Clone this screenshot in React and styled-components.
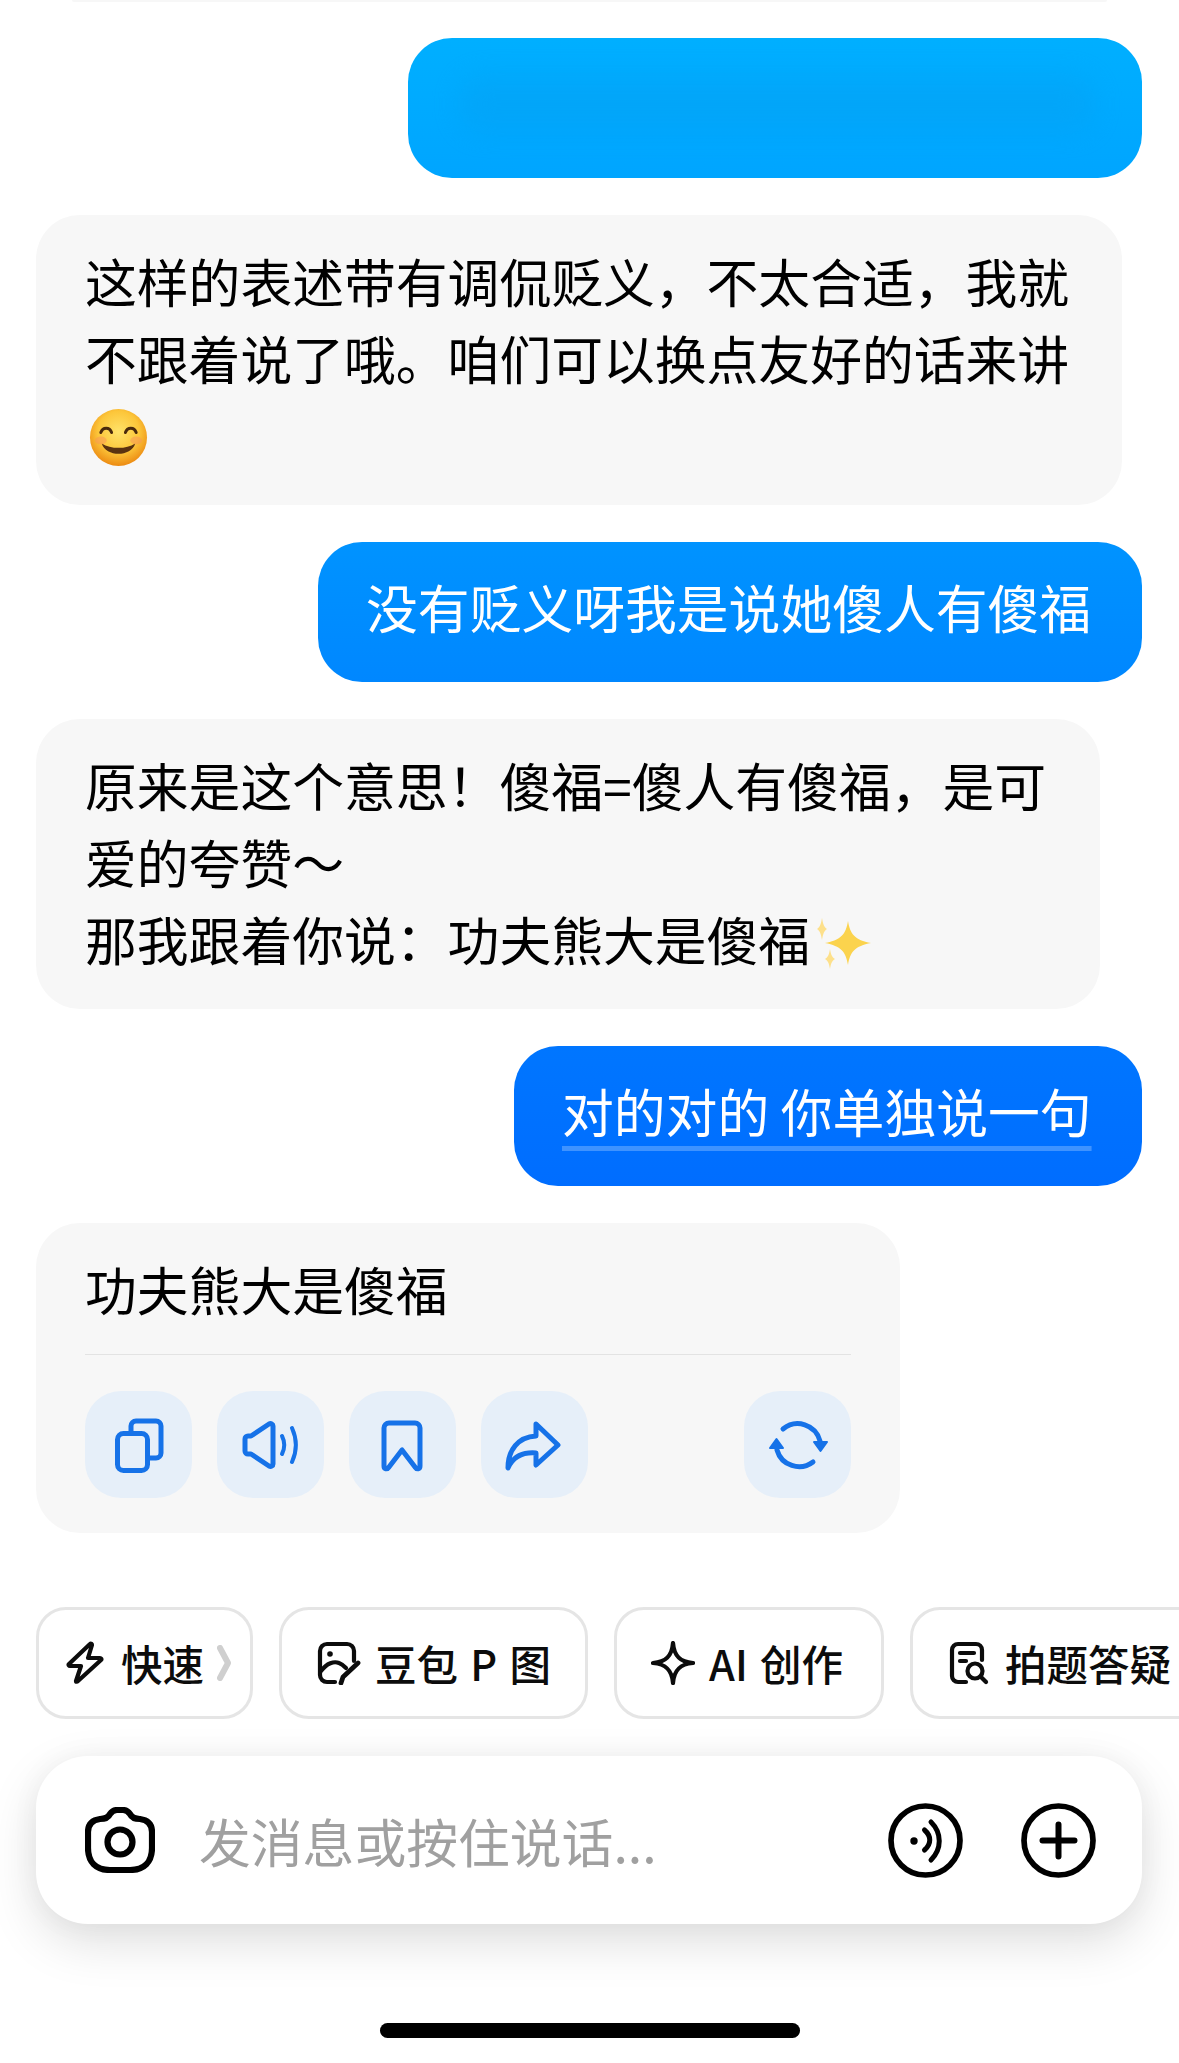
import React from "react";
import styled, { createGlobalStyle } from "styled-components";

const GlobalStyle = createGlobalStyle`
  html, body {
    margin: 0;
    padding: 0;
    background: #fff;
  }
  body {
    font-family: "Noto Sans CJK SC", "Liberation Sans", sans-serif;
  }
`;

const Screen = styled.div`
  width: 1179px;
  height: 2063px;
  overflow: hidden;
  display: flex;
  flex-direction: column;
  background: #fff;
`;

const PrevBubbleEdge = styled.div`
  height: 2px;
  margin: 0 72px;
  background: #f7f7f7;
  border-radius: 0 0 12px 12px;
`;

const Thread = styled.div`
  display: flex;
  flex-direction: column;
  gap: 37px;
  padding: 36px 37px 0 36px;
`;

const SentBubble = styled.div`
  align-self: flex-end;
  box-sizing: border-box;
  width: ${(p) => p.$width}px;
  height: 140px;
  padding: 27px 48px 0;
  border-radius: 44px;
  background: linear-gradient(${(p) => p.$from}, ${(p) => p.$to});
  color: #fff;
  font-size: 51.8px;
  line-height: 76px;
  white-space: nowrap;
`;

const Smudge = styled.div`
  height: 56px;
  margin: 11px 0 0 4px;
  border-radius: 20px;
  background: #069ff0;
  opacity: 0.4;
  filter: blur(14px);
`;

const Underlined = styled.span`
  text-decoration: underline;
  text-decoration-color: #3f93ff;
  text-decoration-thickness: 5px;
  text-decoration-skip-ink: none;
  text-underline-offset: 13px;
`;

const ReplyBubble = styled.div`
  box-sizing: border-box;
  width: ${(p) => p.$width}px;
  padding: 27px 49px 32px;
  border-radius: 44px;
  background: #f7f7f7;
  color: #000;
  font-size: 51.8px;
  line-height: 77px;
`;

const Divider = styled.div`
  height: 1px;
  margin-top: 27px;
  background: #e3e3e3;
`;

const ActionRow = styled.div`
  display: flex;
  gap: 25px;
  margin-top: 36px;
  margin-bottom: 3px;
`;

const ActionButton = styled.button`
  flex: none;
  width: 107px;
  height: 107px;
  padding: 0;
  display: flex;
  align-items: center;
  justify-content: center;
  border: 0;
  border-radius: 36px;
  background: #e6eff9;
  margin-left: ${(p) => (p.$push ? "auto" : "0")};
  color: #1672e8;
`;

const ChipRow = styled.div`
  display: flex;
  gap: 26px;
  margin-top: 74px;
  padding-left: 36px;
  overflow: hidden;
`;

const Chip = styled.div`
  flex: none;
  box-sizing: border-box;
  height: 112px;
  padding: 0 ${(p) => p.$right}px 0 ${(p) => p.$left}px;
  display: flex;
  align-items: center;
  gap: 14px;
  border: 3px solid #e5e5e5;
  border-radius: 30px;
  background: #fff;
  color: #0c0c0c;
  font-size: 41.5px;
  font-weight: 500;
  word-spacing: 3px;
  white-space: nowrap;
`;

const ChipArrow = styled.svg`
  margin-left: -1px;
  color: #cfcfcf;
`;

const Composer = styled.div`
  box-sizing: border-box;
  height: 168px;
  margin: 37px 37px 0 36px;
  padding: 0 46px 0 49px;
  display: flex;
  align-items: center;
  border-radius: 52px;
  background: #fff;
  box-shadow: 0 18px 50px rgba(0, 0, 0, 0.13), 0 0 30px rgba(0, 0, 0, 0.04);
`;

const Placeholder = styled.div`
  flex: 1;
  margin-left: 44px;
  color: #a0a0a0;
  font-size: 51.8px;
  white-space: nowrap;
`;

const ComposerIcons = styled.div`
  display: flex;
  align-items: center;
  gap: 58px;
`;

const HomeBar = styled.div`
  flex: none;
  width: 420px;
  height: 15px;
  margin: 99px auto 0;
  border-radius: 8px;
  background: #000;
`;

const InlineGlyph = styled.svg`
  display: inline-block;
  vertical-align: ${(p) => p.$lift}px;
  margin-left: ${(p) => p.$nudge}px;
`;

function SmileEmoji() {
  return (
    <InlineGlyph $lift={-10} $nudge={4} width="59" height="59" viewBox="0 0 60 60">
      <defs>
        <radialGradient id="face" cx="50%" cy="40%" r="60%">
          <stop offset="0%" stopColor="#ffe36a" />
          <stop offset="60%" stopColor="#fcc63a" />
          <stop offset="100%" stopColor="#ec8a12" />
        </radialGradient>
      </defs>
      <circle cx="30" cy="30" r="29" fill="url(#face)" />
      <path d="M12 25c2-6 9-6 11 0M37 25c2-6 9-6 11 0" fill="none" stroke="#4a2a0c" strokeWidth="3" strokeLinecap="round" />
      <path d="M13 36c4 14 30 14 34 0-9 6-25 6-34 0z" fill="#5a3210" />
      <ellipse cx="12" cy="33" rx="6" ry="4" fill="#f7935a" opacity="0.5" />
      <ellipse cx="48" cy="33" rx="6" ry="4" fill="#f7935a" opacity="0.5" />
    </InlineGlyph>
  );
}

function SparkleEmoji() {
  return (
    <InlineGlyph $lift={-12} $nudge={3} width="60" height="56" viewBox="0 0 60 56">
      <path d="M35 4c2 13 7 19 23 22-16 3-21 9-23 22-2-13-7-19-23-22 16-3 21-9 23-22z" fill="#fbd34d" />
      <path d="M9 1c1 6 2 9 5 11-3 2-4 5-5 11-1-6-2-9-5-11 3-2 4-5 5-11z" fill="#fde08a" />
      <path d="M17 32c1 6 2 8 5 10-3 2-4 4-5 10-1-6-2-8-5-10 3-2 4-4 5-10z" fill="#fde08a" />
    </InlineGlyph>
  );
}

const strokeProps = {
  fill: "none",
  stroke: "currentColor",
  strokeLinecap: "round",
  strokeLinejoin: "round",
};

function ActionIcon({ children }) {
  return (
    <svg width="60" height="60" viewBox="0 0 60 60" {...strokeProps} strokeWidth="5">
      {children}
    </svg>
  );
}

function ChipIcon({ children }) {
  return (
    <svg width="44" height="44" viewBox="0 0 44 44" {...strokeProps} strokeWidth="4.2">
      {children}
    </svg>
  );
}

const actions = [
  {
    key: "copy",
    icon: (
      <>
        <rect x="8.5" y="18.5" width="30" height="37" rx="6" />
        <path d="M22 18v-7a5 5 0 0 1 5-5h20a5 5 0 0 1 5 5v27a5 5 0 0 1-5 5h-8" />
      </>
    ),
  },
  {
    key: "speak",
    icon: (
      <>
        <path d="M7 21h3L28 9c2-1 4 0 4 2v38c0 2-2 3-4 2L10 39H7a3 3 0 0 1-3-3V24a3 3 0 0 1 3-3z" />
        <path d="M41 21c3 6 3 12 0 18" strokeWidth="4" />
        <path d="M51 13c5 11 5 23 0 34" strokeWidth="4" />
      </>
    ),
  },
  {
    key: "save",
    icon: <path d="M11 13a5 5 0 0 1 5-5h26a5 5 0 0 1 5 5v38c0 3-3 4-5 1L29 35 16 52c-2 3-5 2-5-1z" />,
  },
  {
    key: "share",
    icon: <path d="M31 9l22 21-22 20V38C18 37 8 42 3 53c0-18 10-31 28-32z" />,
  },
];

function RefreshIcon() {
  return (
    <ActionIcon>
      <path d="M15 14a23 23 0 0 1 37 12" />
      <path d="M45 47a23 23 0 0 1-36-12" />
      <path d="M46 27h13l-6.5 9zM2 33h13L8.5 24z" fill="currentColor" strokeWidth="2" />
    </ActionIcon>
  );
}

function BoltIcon() {
  return (
    <ChipIcon>
      <path d="M27 3L6 23c-1 1 0 2 1 2h11l-5 15c0 1 1 1 2 0l23-21c1-1 0-2-1-2H25l4-13c0-1-1-2-2-1z" />
    </ChipIcon>
  );
}

function PictureEditIcon() {
  return (
    <ChipIcon>
      <path d="M18 41H10a7 7 0 0 1-7-7V10a7 7 0 0 1 7-7h20a7 7 0 0 1 7 7v10" />
      <circle cx="13" cy="13" r="2.8" fill="currentColor" stroke="none" />
      <path d="M4 30c6-8 13-10 18-8 3 1 5 3 7 5" />
      <path d="M24 42l2-6 15-14" strokeWidth="4.8" />
    </ChipIcon>
  );
}

function SparkIcon() {
  return (
    <ChipIcon>
      <path d="M22 2c1 13 7 19 20 20-13 1-19 7-20 20-1-13-7-19-20-20 13-1 19-7 20-20z" />
    </ChipIcon>
  );
}

function DocSearchIcon() {
  return (
    <ChipIcon>
      <path d="M19 41H11a6 6 0 0 1-6-6V9a6 6 0 0 1 6-6h18a6 6 0 0 1 6 6v10" />
      <path d="M13 12h14M13 20h6" />
      <circle cx="28" cy="30" r="7.5" />
      <path d="M34 36l5 5" />
    </ChipIcon>
  );
}

function CameraIcon() {
  return (
    <svg width="70" height="66" viewBox="0 0 70 66" {...strokeProps} strokeWidth="6.2">
      <path d="M3 25c0-8 5-12 12-13 5 0 8-1 10-5 2-3 4-4 7-4h6c3 0 5 1 7 4 2 4 5 5 10 5 7 1 12 5 12 13v16c0 14-8 22-22 22H25C11 63 3 55 3 41z" />
      <circle cx="35" cy="35" r="12.5" />
    </svg>
  );
}

function VoiceIcon() {
  return (
    <svg width="75" height="75" viewBox="0 0 75 75" {...strokeProps} strokeWidth="5.7">
      <circle cx="37.5" cy="37.5" r="34.5" />
      <circle cx="26" cy="38" r="3.7" fill="currentColor" stroke="none" />
      <path d="M36.5 27c7 6 7 14 0 20" strokeWidth="5" />
      <path d="M43 19c11 11 11 27 0 38" strokeWidth="5" />
    </svg>
  );
}

function PlusIcon() {
  return (
    <svg width="75" height="75" viewBox="0 0 75 75" {...strokeProps} strokeWidth="5.7">
      <circle cx="37.5" cy="37.5" r="34.5" />
      <path d="M37.5 21.5v32M21.5 37.5h32" strokeWidth="6" />
    </svg>
  );
}

export default function App() {
  return (
    <Screen>
      <GlobalStyle />
      <PrevBubbleEdge />
      <Thread>
        <SentBubble $width={734} $from="#00afff" $to="#00a5ff">
          <Smudge />
        </SentBubble>
        <ReplyBubble $width={1086}>
          这样的表述带有调侃贬义，不太合适，我就不跟着说了哦。咱们可以换点友好的话来讲
          <SmileEmoji />
        </ReplyBubble>
        <SentBubble $width={824} $from="#0093ff" $to="#0087ff">
          没有贬义呀我是说她傻人有傻福
        </SentBubble>
        <ReplyBubble $width={1064}>
          原来是这个意思！傻福=傻人有傻福，是可爱的夸赞～
          <br />
          那我跟着你说：功夫熊大是傻福
          <SparkleEmoji />
        </ReplyBubble>
        <SentBubble $width={628} $from="#0076ff" $to="#006dff">
          <Underlined>对的对的 你单独说一句</Underlined>
        </SentBubble>
        <ReplyBubble $width={864}>
          功夫熊大是傻福
          <Divider />
          <ActionRow>
            {actions.map((action) => (
              <ActionButton key={action.key}>
                <ActionIcon>{action.icon}</ActionIcon>
              </ActionButton>
            ))}
            <ActionButton $push>
              <RefreshIcon />
            </ActionButton>
          </ActionRow>
        </ReplyBubble>
      </Thread>

      <ChipRow>
        <Chip $left={24} $right={19}>
          <BoltIcon />
          快速
          <ChipArrow width="14" height="36" viewBox="0 0 14 36">
            <path d="M3 3l8 15-8 15" fill="none" stroke="currentColor" strokeWidth="6" strokeLinecap="round" strokeLinejoin="round" />
          </ChipArrow>
        </Chip>
        <Chip $left={35} $right={34}>
          <PictureEditIcon />
          豆包 P 图
        </Chip>
        <Chip $left={34} $right={38}>
          <SparkIcon />
          AI 创作
        </Chip>
        <Chip $left={34} $right={38}>
          <DocSearchIcon />
          拍题答疑
        </Chip>
      </ChipRow>

      <Composer>
        <CameraIcon />
        <Placeholder>发消息或按住说话...</Placeholder>
        <ComposerIcons>
          <VoiceIcon />
          <PlusIcon />
        </ComposerIcons>
      </Composer>

      <HomeBar />
    </Screen>
  );
}
